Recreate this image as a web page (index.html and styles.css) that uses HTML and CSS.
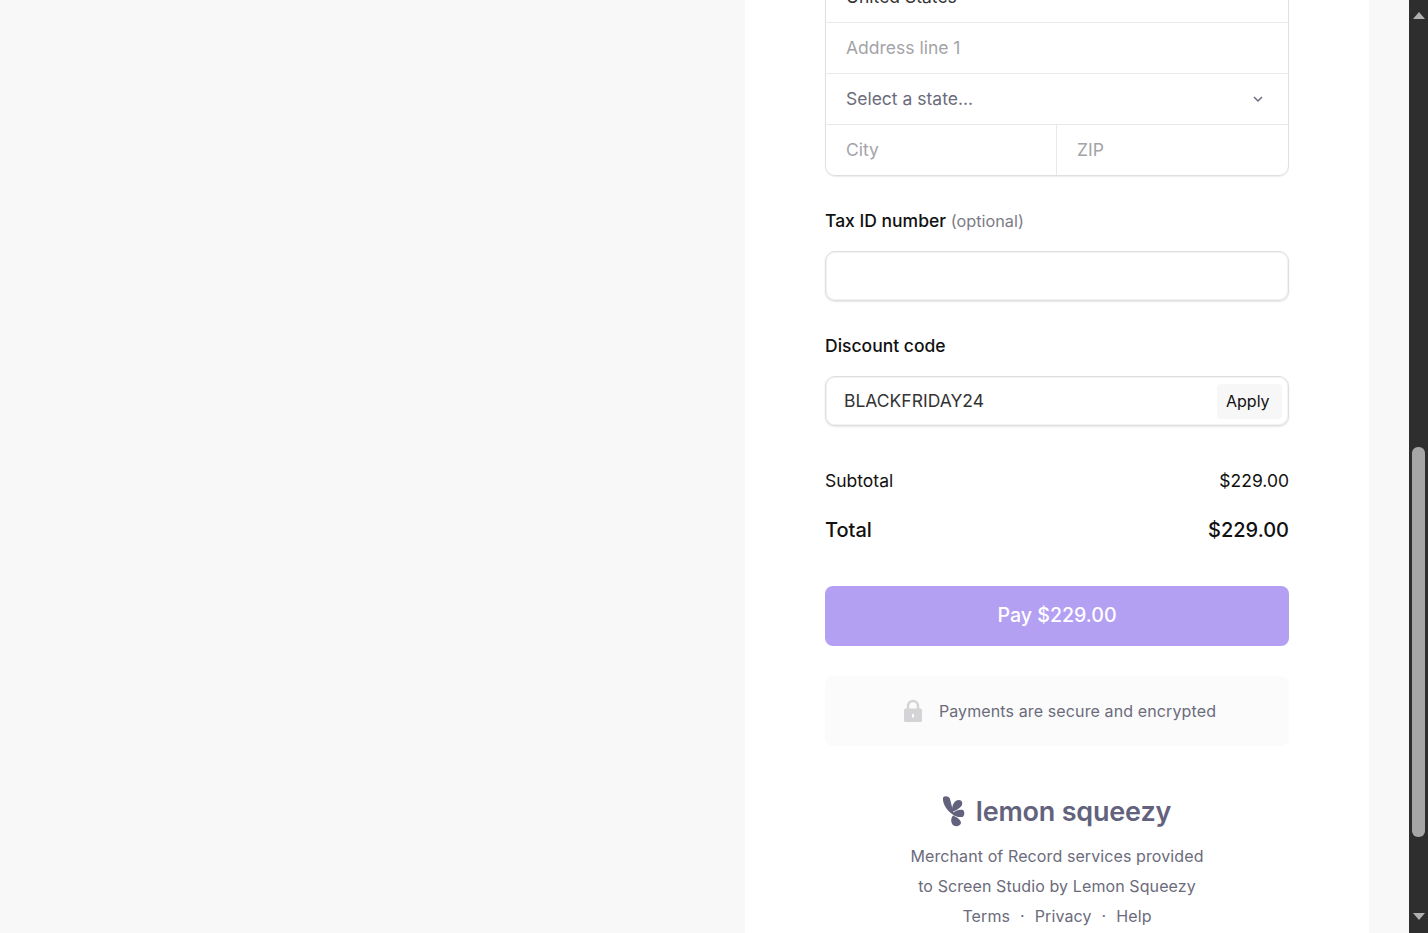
FILE: index.html
```html
<!DOCTYPE html>
<html lang="en">
<head>
    <meta charset="UTF-8">
    <title>Checkout</title>
    <link rel="stylesheet" href="styles.css">
</head>
<body>
    <div class="page">
        <div class="left-side"></div>
        <div class="panel">
            <div class="address-box">
                <div class="row select-row">
                    <span class="value">United States</span>
                    <svg class="chevron" viewBox="0 0 12 12"><path d="M2 4l4 4 4-4"/></svg>
                </div>
                <div class="row placeholder">Address line 1</div>
                <div class="row select-row">
                    <span class="muted">Select a state...</span>
                    <svg class="chevron" viewBox="0 0 12 12"><path d="M2 4l4 4 4-4"/></svg>
                </div>
                <div class="row split">
                    <div class="cell placeholder">City</div>
                    <div class="cell placeholder">ZIP</div>
                </div>
            </div>

            <div class="label tax-label">Tax ID number <span class="optional">(optional)</span></div>
            <div class="input"></div>

            <div class="label discount-label">Discount code</div>
            <div class="input discount">
                <span class="code">BLACKFRIDAY24</span>
                <span class="apply">Apply</span>
            </div>

            <div class="line subtotal"><span>Subtotal</span><span>$229.00</span></div>
            <div class="line total"><span>Total</span><span>$229.00</span></div>

            <button class="pay">Pay $229.00</button>

            <div class="secure">
                <svg class="lock" viewBox="0 0 20 24">
                    <path d="M5 10V7a5 5 0 0 1 10 0v3" fill="none" stroke="#d4d4d6" stroke-width="2.4"/>
                    <path fill-rule="evenodd" fill="#d4d4d6" d="M2.500 9.500h15a1.500 1.500 0 0 1 1.500 1.500v10.500a1.500 1.500 0 0 1-1.500 1.500h-15a1.500 1.500 0 0 1-1.500-1.500V11a1.500 1.500 0 0 1 1.500-1.500zM9 15v3.500h2V15z"/>
                </svg>
                <span>Payments are secure and encrypted</span>
            </div>

            <div class="brand">
                <svg class="leaf" viewBox="0 0 24 32">
                    <path d="M2 2.500C4 .5 8 1 9 4l4 16C8 18 1 10 2 2.500z"/>
                    <path d="M11 17c-.5-6 2-12 7-12 3 0 4 3 2.500 6C18 14 14 16 11 17z"/>
                    <path d="M11 18.500c3-3 8-4.500 11-3.500 2 2 1.500 6-.5 7-3.500.5-8.500-.5-10.500-3.500z"/>
                    <path d="M12 20.500c4 1.500 8 4.500 8 7.500-.5 3-4.500 4-7.500 2.500-3-2.500-3-7 -.5-10z"/>
                </svg>
                <span class="brand-name">lemon squeezy</span>
            </div>
            <div class="foot">Merchant of Record services provided</div>
            <div class="foot">to Screen Studio by Lemon Squeezy</div>
            <div class="foot links"><span>Terms</span><span>·</span><span>Privacy</span><span>·</span><span>Help</span></div>
        </div>
        <div class="right-side"></div>
        <div class="scrollbar">
            <div class="arrow up"></div>
            <div class="track"><div class="thumb"></div></div>
            <div class="arrow down"></div>
        </div>
    </div>
</body>
</html>
```

FILE: styles.css
```css
* {
    box-sizing: border-box;
}
html, body {
    margin: 0;
    height: 100%;
    overflow: hidden;
}
body {
    font-family: 'Inter', 'Liberation Sans', sans-serif;
    color: #111;
    background: #f8f8f8;
}
.page {
    display: grid;
    grid-template-columns: 745px 624px 40px 19px;
    height: 933px;
}
.left-side, .right-side {
    background: #f8f8f8;
}
.panel {
    background: white;
    padding: 0 80px;
    height: 933px;
    overflow: hidden;
}
.address-box {
    margin-top: -29px;
    border: 1px solid #e0e0e3;
    border-radius: 10px;
    box-shadow: 0 1px 1px rgba(0,0,0,0.08);
    font-size: 17.5px;
}
.row {
    height: 51px;
    display: flex;
    align-items: center;
    padding: 0 20px 2px;
    border-bottom: 1px solid #e9e9eb;
}
.row:last-child {
    border-bottom: 0;
    height: 50px;
}
.select-row {
    justify-content: space-between;
    padding-right: 24px;
}
.chevron {
    width: 12px;
    height: 12px;
    margin-top: 2px;
    fill: none;
    stroke: #6b6b80;
    stroke-width: 1.5;
}
.value {
    color: #333;
}
.muted {
    color: #6b6b7b;
}
.placeholder {
    color: #a3a3a8;
}
.split {
    display: grid;
    grid-template-columns: 230px 1fr;
    padding: 0;
}
.cell {
    height: 100%;
    display: flex;
    align-items: center;
    padding: 0 20px 2px;
}
.cell + .cell {
    border-left: 1px solid #e9e9eb;
}
.label {
    font-size: 17.5px;
    line-height: 24px;
    font-weight: 500;
    color: #111;
}
.tax-label {
    margin-top: 33px;
    margin-bottom: 18px;
}
.discount-label {
    margin-top: 33px;
    margin-bottom: 18px;
}
.optional {
    font-size: 16.3px;
    font-weight: 400;
    color: #7b7b86;
}
.input {
    height: 50px;
    border: 1px solid #dfdfe2;
    border-radius: 10px;
    box-shadow: inset 0 0 0 1px #f2f2f3, 0 1px 2px rgba(0,0,0,0.1);
    background: white;
}
.discount {
    display: flex;
    align-items: center;
    justify-content: space-between;
    padding: 0 6px 0 18px;
}
.code {
    font-size: 17.5px;
    margin-bottom: 2px;
    color: #333;
}
.apply {
    background: #f7f7f7;
    border-radius: 4px;
    height: 35px;
    line-height: 35px;
    width: 65px;
    padding-left: 9px;
    font-size: 16px;
    font-weight: 400;
    color: #111;
}
.line {
    display: flex;
    justify-content: space-between;
    align-items: center;
}
.subtotal {
    margin-top: 41px;
    height: 26px;
    font-size: 17.5px;
}
.total {
    margin-top: 23px;
    height: 28px;
    font-size: 20px;
    font-weight: 500;
}
.pay {
    display: block;
    width: 100%;
    height: 60px;
    margin-top: 42px;
    padding-bottom: 4px;
    border: none;
    border-radius: 8px;
    background: #b3a0f3;
    color: white;
    font-family: inherit;
    font-size: 19.6px;
    font-weight: 500;
}
.secure {
    height: 70px;
    margin-top: 30px;
    padding-left: 5px;
    background: #fbfbfb;
    border-radius: 8px;
    display: flex;
    align-items: center;
    justify-content: center;
    gap: 16px;
    font-size: 16px;
    letter-spacing: 0.12px;
    color: #6b6b7b;
}
.lock {
    width: 20px;
    height: 24px;
}
.brand {
    display: flex;
    align-items: center;
    justify-content: center;
    gap: 11px;
    margin-top: 48px;
    height: 34px;
    color: #63627d;
}
.leaf {
    width: 24px;
    height: 32px;
    margin-left: -2px;
    fill: #63627d;
}
.brand-name {
    font-size: 27px;
    font-weight: 600;
    letter-spacing: -0.2px;
}
.foot {
    height: 30px;
    line-height: 30px;
    text-align: center;
    font-size: 16px;
    letter-spacing: 0.1px;
    color: #6b6b7b;
}
.brand + .foot {
    margin-top: 13px;
}
.links {
    display: flex;
    justify-content: center;
    gap: 10px;
}
.scrollbar {
    background: #2e2e2e;
    display: flex;
    flex-direction: column;
    height: 933px;
}
.arrow {
    display: flex;
    align-items: center;
    justify-content: center;
}
.up {
    height: 31px;
}
.down {
    height: 33px;
}
.arrow::before {
    content: "";
    border-left: 6.5px solid transparent;
    border-right: 6.5px solid transparent;
}
.up::before {
    border-bottom: 7px solid #b0b0b0;
}
.down::before {
    border-top: 7px solid #b0b0b0;
}
.track {
    flex: 1;
    padding: 416px 3px 0;
}
.thumb {
    height: 390px;
    background: #a6a6a6;
    border-radius: 6px;
}
```
